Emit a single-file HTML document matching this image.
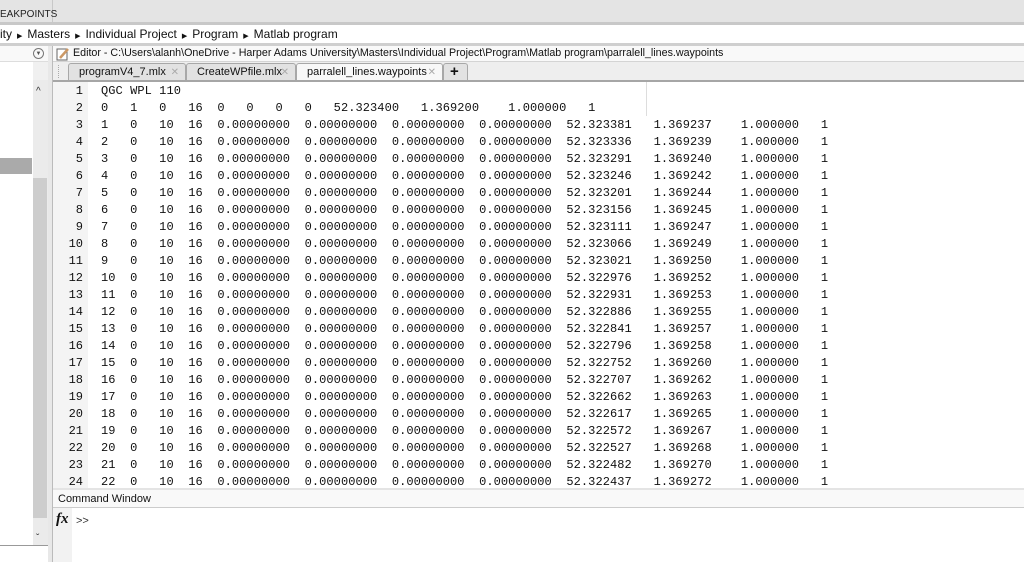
<!DOCTYPE html>
<html><head><meta charset="utf-8"><style>
*{margin:0;padding:0;box-sizing:border-box}
body{width:1024px;height:562px;overflow:hidden;background:#e9e9e9;font-family:"Liberation Sans",sans-serif;font-size:11px;color:#111;position:relative}
.a{position:absolute}
pre{font-family:"Liberation Mono",monospace;font-size:12px;line-height:17px;margin:0;letter-spacing:0.07px}
.tab{position:absolute;top:63px;height:18px;border:1px solid #a8a8a8;border-bottom:none;background:#e2e2e2;font-size:11px;line-height:17px;padding-left:10px;border-radius:3px 3px 0 0}
.x{position:absolute;right:6px;top:0;color:#aaa;font-size:10px}
.ar{font-size:7px;margin:0 5px}
</style></head><body>
<div class="a" style="left:0;top:0;width:1024px;height:22px;background:#e4e4e4"></div>
<div class="a" style="left:52px;top:0;width:1px;height:22px;background:#c8c8c8"></div>
<div class="a" style="left:0;top:9px;font-size:10px;color:#222">EAKPOINTS</div>
<div class="a" style="left:0;top:22px;width:1024px;height:3px;background:#c8c8c8"></div>
<div class="a" style="left:0;top:25px;width:1024px;height:18px;background:#fff;font-size:12px;line-height:19px;white-space:nowrap">ity<span class="ar">▶</span>Masters<span class="ar">▶</span>Individual Project<span class="ar">▶</span>Program<span class="ar">▶</span>Matlab program</div>
<div class="a" style="left:0;top:43px;width:1024px;height:3px;background:#cfcfcf"></div>
<!-- left panel -->
<div class="a" style="left:0;top:46px;width:48px;height:516px;background:#fff"></div>
<div class="a" style="left:0;top:46px;width:48px;height:16px;background:#f9f9f9;border-bottom:1px solid #ddd"></div>
<div class="a" style="left:33px;top:48px;width:11px;height:11px;border:1px solid #777;border-radius:50%;font-size:6px;text-align:center;line-height:10px;color:#555">▼</div>
<div class="a" style="left:33px;top:62px;width:15px;height:18px;background:#f0f0f0"></div>
<div class="a" style="left:33px;top:80px;width:15px;height:465px;background:#ebebeb"></div>
<div class="a" style="left:33px;top:178px;width:14px;height:340px;background:#cdcdcd"></div>
<div class="a" style="left:36px;top:86px;font-size:10px;color:#333">^</div>
<div class="a" style="left:36px;top:533px;font-size:10px;color:#333">ˇ</div>
<div class="a" style="left:0;top:158px;width:32px;height:16px;background:#aaa"></div>
<div class="a" style="left:0;top:545px;width:48px;height:17px;background:#fff;border-top:1px solid #999"></div>
<div class="a" style="left:48px;top:46px;width:5px;height:516px;background:#e8e8e8;border-right:1px solid #bbb"></div>
<!-- editor -->
<div class="a" style="left:53px;top:46px;width:971px;height:16px;background:#f9f9f9;border-bottom:1px solid #d4d4d4;font-size:10.7px;line-height:15px;padding-left:20px;white-space:nowrap">Editor - C:\Users\alanh\OneDrive - Harper Adams University\Masters\Individual Project\Program\Matlab program\parralell_lines.waypoints</div>
<svg class="a" style="left:56px;top:47px" width="14" height="14"><rect x="1" y="2" width="10" height="11" fill="#fff" stroke="#666"/><path d="M4 11 L12 2" stroke="#c96" stroke-width="2.5"/></svg>
<div class="a" style="left:53px;top:62px;width:971px;height:18px;background:#eee"></div>
<div class="a" style="left:58px;top:65px;width:1px;height:13px;border-left:1px dotted #aaa"></div>
<div class="tab" style="left:68px;width:118px">programV4_7.mlx<span class="x">✕</span></div>
<div class="tab" style="left:186px;width:110px">CreateWPfile.mlx<span class="x">✕</span></div>
<div class="tab" style="left:296px;width:147px;background:#f8f8f8">parralell_lines.waypoints<span class="x">✕</span></div>
<div class="tab" style="left:443px;width:25px;padding-left:6px;font-size:15px;font-weight:bold;line-height:16px">+</div>
<div class="a" style="left:53px;top:80px;width:971px;height:2px;background:#a6a6a6"></div>
<div class="a" style="left:53px;top:82px;width:971px;height:406px;background:#fff"></div>
<div class="a" style="left:53px;top:82px;width:35px;height:406px;background:#f4f4f4"></div>
<div class="a" style="left:646px;top:82px;width:1px;height:34px;background:#ddd"></div>
<pre class="a" style="left:53px;top:83px;width:30px;text-align:right;letter-spacing:0">1
2
3
4
5
6
7
8
9
10
11
12
13
14
15
16
17
18
19
20
21
22
23
24</pre>
<pre class="a" style="left:101px;top:83px">QGC WPL 110
0   1   0   16  0   0   0   0   52.323400   1.369200    1.000000   1
1   0   10  16  0.00000000  0.00000000  0.00000000  0.00000000  52.323381   1.369237    1.000000   1
2   0   10  16  0.00000000  0.00000000  0.00000000  0.00000000  52.323336   1.369239    1.000000   1
3   0   10  16  0.00000000  0.00000000  0.00000000  0.00000000  52.323291   1.369240    1.000000   1
4   0   10  16  0.00000000  0.00000000  0.00000000  0.00000000  52.323246   1.369242    1.000000   1
5   0   10  16  0.00000000  0.00000000  0.00000000  0.00000000  52.323201   1.369244    1.000000   1
6   0   10  16  0.00000000  0.00000000  0.00000000  0.00000000  52.323156   1.369245    1.000000   1
7   0   10  16  0.00000000  0.00000000  0.00000000  0.00000000  52.323111   1.369247    1.000000   1
8   0   10  16  0.00000000  0.00000000  0.00000000  0.00000000  52.323066   1.369249    1.000000   1
9   0   10  16  0.00000000  0.00000000  0.00000000  0.00000000  52.323021   1.369250    1.000000   1
10  0   10  16  0.00000000  0.00000000  0.00000000  0.00000000  52.322976   1.369252    1.000000   1
11  0   10  16  0.00000000  0.00000000  0.00000000  0.00000000  52.322931   1.369253    1.000000   1
12  0   10  16  0.00000000  0.00000000  0.00000000  0.00000000  52.322886   1.369255    1.000000   1
13  0   10  16  0.00000000  0.00000000  0.00000000  0.00000000  52.322841   1.369257    1.000000   1
14  0   10  16  0.00000000  0.00000000  0.00000000  0.00000000  52.322796   1.369258    1.000000   1
15  0   10  16  0.00000000  0.00000000  0.00000000  0.00000000  52.322752   1.369260    1.000000   1
16  0   10  16  0.00000000  0.00000000  0.00000000  0.00000000  52.322707   1.369262    1.000000   1
17  0   10  16  0.00000000  0.00000000  0.00000000  0.00000000  52.322662   1.369263    1.000000   1
18  0   10  16  0.00000000  0.00000000  0.00000000  0.00000000  52.322617   1.369265    1.000000   1
19  0   10  16  0.00000000  0.00000000  0.00000000  0.00000000  52.322572   1.369267    1.000000   1
20  0   10  16  0.00000000  0.00000000  0.00000000  0.00000000  52.322527   1.369268    1.000000   1
21  0   10  16  0.00000000  0.00000000  0.00000000  0.00000000  52.322482   1.369270    1.000000   1
22  0   10  16  0.00000000  0.00000000  0.00000000  0.00000000  52.322437   1.369272    1.000000   1</pre>
<div class="a" style="left:53px;top:488px;width:971px;height:2px;background:#e4e4e4"></div>
<div class="a" style="left:53px;top:490px;width:971px;height:18px;background:#f9f9f9;border-bottom:1px solid #ccc;padding-left:5px;line-height:18px;font-size:11px">Command Window</div>
<div class="a" style="left:53px;top:508px;width:971px;height:54px;background:#fff"></div>
<div class="a" style="left:53px;top:508px;width:19px;height:54px;background:#f2f2f2"></div>
<div class="a" style="left:56px;top:511px;font-family:'Liberation Serif',serif;font-style:italic;font-weight:bold;font-size:15px">fx</div>
<div class="a" style="left:76px;top:515px;font-size:11px;color:#333">&gt;&gt;</div>
</body></html>
